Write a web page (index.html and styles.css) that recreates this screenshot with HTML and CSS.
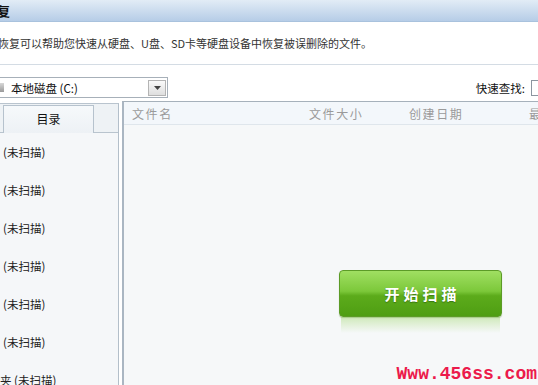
FILE: index.html
```html
<!DOCTYPE html>
<html lang="zh-CN">
<head>
    <meta charset="UTF-8">
    <title>数据恢复</title>
    <link rel="stylesheet" href="styles.css">
</head>
<body>
    <div class="window">
        <div class="titlebar"><span class="title">复</span></div>

        <div class="desc">恢复可以帮助您快速从硬盘、U盘、SD卡等硬盘设备中恢复被误删除的文件。</div>

        <div class="toolbar">
            <div class="drive-select">
                <span class="drive-icon"></span>
                <span class="drive-name">本地磁盘 (C:)</span>
                <span class="drop-btn">
                    <svg width="7" height="4" viewBox="0 0 7 4"><path d="M0 0h7L3.5 4z" fill="#444"/></svg>
                </span>
            </div>
            <div class="search">
                <span class="search-label">快速查找:</span>
                <span class="search-input"></span>
            </div>
        </div>

        <div class="main">
            <div class="side">
                <div class="side-tabs">
                    <div class="tab">目录</div>
                </div>
                <ul class="tree">
                    <li>(未扫描)</li>
                    <li>(未扫描)</li>
                    <li>(未扫描)</li>
                    <li>(未扫描)</li>
                    <li>(未扫描)</li>
                    <li>(未扫描)</li>
                    <li>夹 (未扫描)</li>
                </ul>
            </div>

            <div class="files">
                <div class="file-head">
                    <span>文件名</span>
                    <span>文件大小</span>
                    <span>创建日期</span>
                    <span>最</span>
                </div>
                <div class="file-body">
                    <div class="scan">
                        <button class="scan-btn">开始扫描</button>
                        <div class="scan-reflect"></div>
                    </div>
                </div>
            </div>
        </div>

        <div class="watermark">Www.456ss.com</div>
    </div>
</body>
</html>
```

FILE: styles.css
```css
* {
    margin: 0;
    padding: 0;
    box-sizing: border-box;
}

body {
    font-family: "Noto Sans CJK SC", "Noto Sans", sans-serif;
    background: #ffffff;
    color: #222;
    width: 538px;
    height: 385px;
    overflow: hidden;
}

.window {
    position: relative;
    width: 538px;
    height: 385px;
    overflow: hidden;
}

.titlebar {
    height: 22px;
    background: linear-gradient(#e2ecf6, #b6cde7);
    border-bottom: 1px solid #a9c2dd;
}

.title {
    display: block;
    margin-left: -3px;
    font-size: 13px;
    font-weight: bold;
    line-height: 21px;
    color: #111;
}

.desc {
    height: 43px;
    line-height: 43px;
    margin-left: -2px;
    font-size: 11px;
    color: #333;
    white-space: nowrap;
    border-bottom: 1px solid #d4dce4;
}

.toolbar {
    height: 36px;
    padding-top: 12px;
    display: flex;
    justify-content: space-between;
}

.drive-select {
    width: 168px;
    height: 21px;
    border: 1px solid #a7b0b9;
    border-left: none;
    display: flex;
    align-items: center;
    background: #fff;
}

.drive-icon {
    width: 4px;
    height: 9px;
    background: linear-gradient(#d8d8d8, #9a9a9a);
    margin-right: 7px;
}

.drive-name {
    flex: 1;
    font-size: 11.5px;
    color: #111;
}

.drop-btn {
    width: 18px;
    height: 16px;
    margin-right: 1px;
    border: 1px solid #b4b4b4;
    background: linear-gradient(#fafafa, #dedede);
    display: flex;
    align-items: center;
    justify-content: center;
}

.search {
    display: flex;
    align-items: center;
    height: 21px;
}

.search-label {
    font-size: 11.5px;
    color: #111;
    margin-right: 6px;
}

.search-input {
    width: 7px;
    height: 16px;
    border: 1px solid #8c96a0;
    border-right: none;
    background: #fff;
}

.main {
    display: flex;
    height: 284px;
}

.side {
    flex-shrink: 0;
    width: 119px;
    margin-top: 2px;
    margin-right: 3px;
    border-top: 1px solid #b9c4ce;
    border-right: 1px solid #b3bfca;
    background: #f5f7f9;
}

.side-tabs {
    height: 29px;
    padding: 1px 0 0 3px;
    background: #eef2f5;
    border-bottom: 1px solid #b9c4ce;
}

.tab {
    width: 91px;
    height: 28px;
    border: 1px solid #b6c2cd;
    border-bottom: none;
    background: linear-gradient(#f6f9fb, #edf1f5);
    font-size: 12px;
    line-height: 26px;
    text-align: center;
    color: #111;
}

.tree {
    list-style: none;
}

.tree li {
    height: 38px;
    line-height: 38px;
    padding-left: 3px;
    font-size: 11.5px;
    color: #222;
    white-space: nowrap;
}

.tree li:last-child {
    padding-left: 0;
}

.files {
    flex: 1;
    min-width: 0;
    border-top: 1px solid #a6b1bb;
    border-left: 2px solid #aab6c2;
    background: #f6f8f9;
}

.file-head {
    height: 23px;
    display: grid;
    grid-template-columns: 177px 100px 120px 1fr;
    align-items: center;
    padding-left: 8px;
    background: #f3f7fb;
    border-bottom: 1px solid #dfe6ec;
    font-size: 12px;
    letter-spacing: 1.6px;
    color: #9a9a9a;
    white-space: nowrap;
}

.file-body {
    padding: 145px 0 0 215px;
}

.scan {
    width: 163px;
}

.scan-btn {
    display: block;
    width: 163px;
    height: 47px;
    border: 1px solid #5c9b27;
    border-radius: 4px;
    background: linear-gradient(#a0df62 0%, #7cc83a 45%, #5cab1b 55%, #4f9e13 100%);
    color: #fff;
    font-family: inherit;
    font-size: 15px;
    font-weight: bold;
    letter-spacing: 4px;
    text-indent: 4px;
    text-shadow: 0 1px 1px rgba(40, 90, 10, 0.6);
    box-shadow: 0 1px 1px rgba(70, 120, 30, 0.4);
}

.scan-reflect {
    height: 16px;
    margin: 0 2px;
    background: linear-gradient(rgba(160, 215, 110, 0.45), rgba(255, 255, 255, 0));
}

.watermark {
    position: absolute;
    right: 1px;
    bottom: 1px;
    font-family: "Liberation Mono", monospace;
    font-size: 18px;
    font-weight: bold;
    line-height: 20px;
    color: #ec1a4b;
}
```
